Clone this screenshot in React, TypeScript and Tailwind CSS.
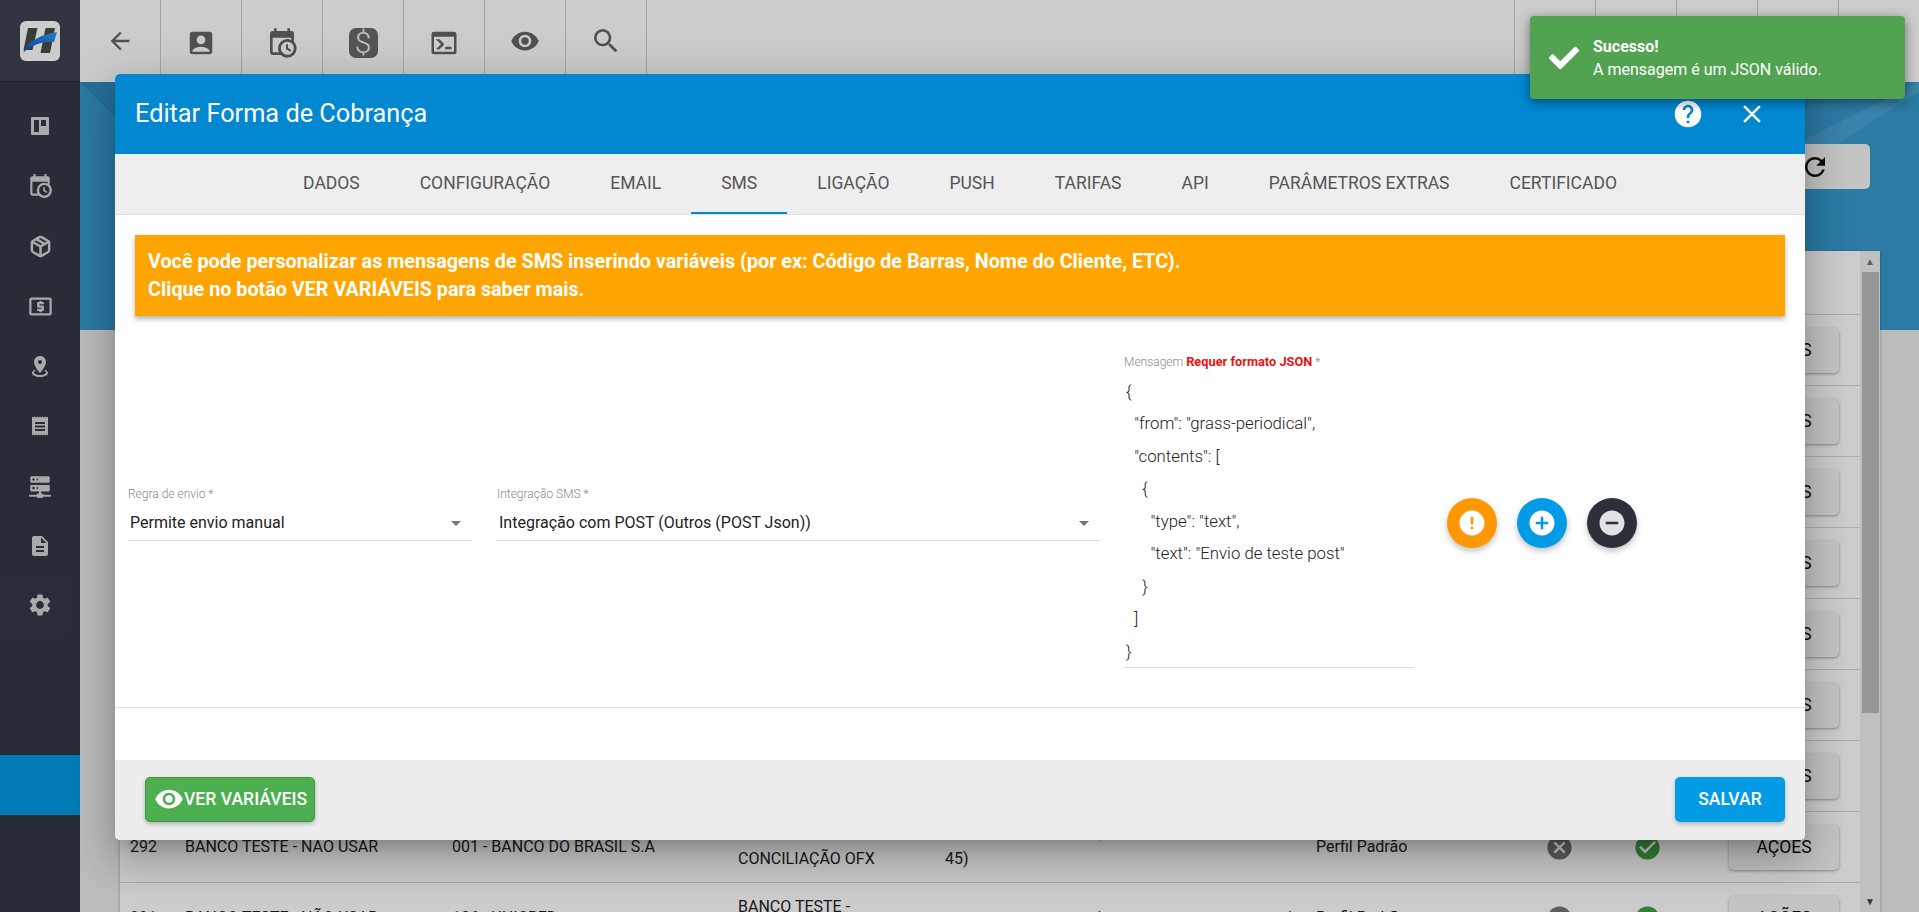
import React from "react";
import {
  MdArrowBack, MdAccountBox, MdVisibility, MdSearch, MdHelp, MdClose, MdError, MdAddCircle,
  MdRemoveCircle, MdArrowDropDown, MdDescription, MdSettings, MdOutlineLocalAtm, MdRefresh, MdCancel, MdCheckCircle,
} from "react-icons/md";
import { FaCheck } from "react-icons/fa";
import { Package } from "lucide-react";

const P = ({ d, size = 24, className = "" }: { d: string; size?: number; className?: string }) => (
  <svg width={size} height={size} viewBox="0 0 24 24" fill="currentColor" className={className}>
    <path d={d} />
  </svg>
);

const calClock = "M15,13H16.5V15.82L18.94,17.23L18.19,18.53L15,16.69V13M19,8H5V19H9.67C9.24,18.09 9,17.07 9,16A7,7 0 0,1 16,9C17.07,9 18.09,9.24 19,9.67V8M5,21C3.89,21 3,20.1 3,19V5C3,3.89 3.89,3 5,3H6V1H8V3H16V1H18V3H19A2,2 0 0,1 21,5V11.1C22.24,12.36 23,14.09 23,16A7,7 0 0,1 16,23C14.09,23 12.36,22.24 11.1,21H5M16,11.15A4.85,4.85 0 0,0 11.15,16C11.15,18.68 13.32,20.85 16,20.85A4.85,4.85 0 0,0 20.85,16C20.85,13.32 18.68,11.15 16,11.15Z";
const marker = "M12,2C15.31,2 18,4.66 18,7.95C18,12.41 12,19 12,19C12,19 6,12.41 6,7.95C6,4.66 8.69,2 12,2M12,6A2,2 0 0,0 10,8A2,2 0 0,0 12,10A2,2 0 0,0 14,8A2,2 0 0,0 12,6M20,19C20,21.21 16.42,23 12,23C7.58,23 4,21.21 4,19C4,17.71 5.22,16.56 7.11,15.83L7.75,16.74C6.67,17.19 6,17.81 6,18.5C6,19.88 8.69,21 12,21C15.31,21 18,19.88 18,18.5C18,17.81 17.33,17.19 16.25,16.74L16.89,15.83C18.78,16.56 20,17.71 20,19Z";
const server = "M13,19H14A1,1 0 0,1 15,20H22V22H15A1,1 0 0,1 14,23H10A1,1 0 0,1 9,22H2V20H9A1,1 0 0,1 10,19H11V17H4A1,1 0 0,1 3,16V12A1,1 0 0,1 4,11H20A1,1 0 0,1 21,12V16A1,1 0 0,1 20,17H13V19M4,3H20A1,1 0 0,1 21,4V8A1,1 0 0,1 20,9H4A1,1 0 0,1 3,8V4A1,1 0 0,1 4,3M9,7H10V5H9V7M9,15H10V13H9V15M5,5V7H7V5H5M5,13V15H7V13H5Z";
const consoleI = "M20,19V7H4V19H20M20,3A2,2 0 0,1 22,5V19A2,2 0 0,1 20,21H4A2,2 0 0,1 2,19V5A2,2 0 0,1 4,3H20M13,17V15H18V17H13M9.58,13L5.57,9H8.4L11.7,12.3C12.09,12.69 12.09,13.33 11.7,13.72L8.42,17H5.59L9.58,13Z";
const board = "M4 3h16a1 1 0 0 1 1 1v16a1 1 0 0 1-1 1H4a1 1 0 0 1-1-1V4a1 1 0 0 1 1-1zm2 3v12h5V6H6zm7 0v6h5V6h-5z";
const receipt = "M4 2.5l1.3 1 1.3-1 1.4 1 1.3-1 1.3 1 1.4-1 1.3 1 1.4-1 1.3 1 1.3-1 1.4 1 1.3-1v19l-1.3-1-1.4 1-1.3-1-1.3 1-1.4-1-1.3 1-1.4-1-1.3 1-1.3-1-1.4 1-1.3-1-1.3 1zM7 8v2h10V8zm0 3.5v2h10v-2zM7 15v2h10v-2z";

const sideIcons = [
  <P d={board} size={24} />,
  <P d={calClock} size={26} />,
  <Package size={23} strokeWidth={2.6} />,
  <MdOutlineLocalAtm size={27} />,
  <P d={marker} size={24} />,
  <P d={receipt} size={24} />,
  <P d={server} size={26} />,
  <MdDescription size={24} />,
  <MdSettings size={26} />,
];

const topIcons = [
  <MdArrowBack size={28} />,
  <MdAccountBox size={30} className="mt-[3px]" />,
  <P d={calClock} size={32} className="mt-[4px]" />,
  <div className="mt-[3px] w-[29px] h-[30px] rounded-[7px] bg-[#6a6a6a] text-[#f2f2f2] flex items-center justify-center text-[30px] leading-none font-light">$</div>,
  <P d={consoleI} size={30} className="mt-[3px]" />,
  <MdVisibility size={30} />,
  <MdSearch size={32} />,
];

const tabs = ["DADOS", "CONFIGURAÇÃO", "EMAIL", "SMS", "LIGAÇÃO", "PUSH", "TARIFAS", "API", "PARÂMETROS EXTRAS", "CERTIFICADO"];

const json = `{
  "from": "grass-periodical",
  "contents": [
    {
      "type": "text",
      "text": "Envio de teste post"
    }
  ]
}`;

const rowCols = "grid grid-cols-[55px_267px_286px_207px_371px_184px_118px_58px_1fr] items-center pl-[10px] h-[71px] border-t border-[#d8d8d8] shrink-0";

const Row = ({ id, bank, acc, emp }: { id: string; bank: string; acc: React.ReactNode; emp: React.ReactNode }) => (
  <div className={rowCols}>
    <div>{id}</div>
    <div>BANCO TESTE - NÃO USAR</div>
    <div>{bank}</div>
    <div className="leading-[23px]">{acc}</div>
    <div className="leading-[23px]">{emp}</div>
    <div>Perfil Padrão</div>
    <div className="flex justify-center"><MdCancel size={29} className="text-[#757575]" /></div>
    <div className="flex justify-center"><MdCheckCircle size={29} className="text-[#43a047]" /></div>
    <div className="pl-[53px]">
      <div className="w-[110px] h-[45px] rounded-[5px] bg-[#f5f5f5] shadow-[0_1px_3px_rgba(0,0,0,0.35)] flex items-center justify-center text-[#111] text-[17.5px]">AÇÕES</div>
    </div>
  </div>
);

const Field = ({ label, value, w }: { label: string; value: string; w: string }) => (
  <div className={`${w} shrink-0 mt-[148px]`}>
    <div className="text-[12px] leading-[14px] text-[#8a8a8a] font-light">{label}</div>
    <div className="flex items-center justify-between h-[36px] mt-[4px] border-b border-[#dcdcdc] pl-[2px] pr-[4px] text-[16px] text-[#222]">
      <span>{value}</span>
      <MdArrowDropDown size={24} className="text-[#757575]" />
    </div>
  </div>
);

const Circle = ({ bg, children }: { bg: string; children: React.ReactNode }) => (
  <div className={`${bg} w-[50px] h-[50px] rounded-full flex items-center justify-center shadow-[0_3px_6px_rgba(0,0,0,0.25)]`}>{children}</div>
);

export default function App() {
  return (
    <div className="relative w-[1919px] h-[912px] overflow-hidden flex bg-[#ebebeb] text-[16px]" style={{ fontFamily: "Roboto, sans-serif" }}>
      <aside className="w-20 shrink-0 flex flex-col bg-[#313745] text-[#d4d4d4]">
        <div className="h-[82px] shrink-0 bg-[#3c414f] border-b border-[#262a34] flex items-center justify-center">
          <div className="w-10 h-10 rounded-[6px] bg-[#ffffff] flex items-center justify-center">
            <svg width="40" height="40" viewBox="0 0 40 40">
              <defs>
                <linearGradient id="sw" x1="0" y1="1" x2="1" y2="0">
                  <stop offset="0" stopColor="#0a55c0" />
                  <stop offset="1" stopColor="#2f9df5" />
                </linearGradient>
              </defs>
              <path d="M8 7h9.5L12.5 29H3.5z" fill="#4a4a4a" />
              <path d="M25.5 7H35l-5 25h-9.5z" fill="#4a4a4a" />
              <path d="M3 32C8 20 20 14 37 11l-3 10C22 20 12 24 3 32z" fill="url(#sw)" />
            </svg>
          </div>
        </div>
        <div className="h-[493px] shrink-0 pt-[14px] flex flex-col">
          {sideIcons.slice(0, 8).map((ic, i) => (
            <div key={i} className="h-[60px] shrink-0 flex items-center justify-center">{ic}</div>
          ))}
        </div>
        <div className="h-[60px] shrink-0 flex items-center justify-center bg-[#343948]">{sideIcons[8]}</div>
        <div className="h-[120px] shrink-0" />
        <div className="h-[60px] shrink-0 bg-[#039be5]" />
        <div className="flex-1" />
      </aside>

      <main className="flex-1 min-w-0 flex flex-col">
        <div className="h-[82px] shrink-0 bg-white flex text-[#666]">
          {topIcons.map((ic, i) => (
            <div key={i} className="w-[81px] border-r border-[#cfcfcf] flex items-center justify-center">{ic}</div>
          ))}
          <div className="flex-1" />
          {[0, 1, 2, 3, 4].map((i) => (
            <div key={i} className="w-[81px] border-l border-[#cfcfcf]" />
          ))}
        </div>
        <div className="relative h-[248px] shrink-0 bg-[#369ace] flex justify-end items-start pt-[62px] pr-[49px] overflow-hidden">
          <svg className="absolute inset-0" width="1839" height="248" viewBox="0 0 1839 248">
            <polygon points="0,0 60,0 60,60" fill="#2f8dbf" />
            <polygon points="1839,0 1839,10 1745,70 1700,70" fill="#5aaddb" opacity="0.5" />
          </svg>
          <div className="relative w-[110px] h-[45px] rounded-[5px] bg-[#f5f5f5] flex items-center justify-center text-[#111]">
            <MdRefresh size={30} />
          </div>
        </div>
        <div className="relative -mt-[79px] ml-10 mr-[39px] h-[800px] shrink-0 bg-white flex text-[#222] shadow-[0_1px_3px_rgba(0,0,0,0.3)]">
          <div className="flex-1 min-w-0 flex flex-col">
            <div className="h-[63px] shrink-0" />
            {Array.from({ length: 7 }).map((_, i) => (
              <Row key={i} id={String(299 - i)} bank="001 - BANCO DO BRASIL S.A" acc="" emp="" />
            ))}
            <Row
              id="292"
              bank="001 - BANCO DO BRASIL S.A"
              acc={<div className="leading-[27px] -mt-[5px]">BANCO TESTE -<br />CONCILIAÇÃO OFX</div>}
              emp={<div className="leading-[27px] -mt-[5px]">EMPRESA DE TESTE (CNPJ 45.243.814/0001-<br />45)</div>}
            />
            <Row id="291" bank="136 - UNICRED" acc={<>BANCO TESTE -<br />CONCILIAÇÃO OFX</>} emp={<>EMPRESA DE TESTE (CNPJ 45.243.814/0001-05)</>} />
          </div>
          <div className="w-5 shrink-0 bg-[#f1f1f1] h-[661px] flex flex-col items-center">
            <div className="h-[21px] flex items-center text-[#777] text-[10px] leading-none">▲</div>
            <div className="w-[17px] h-[441px] bg-[#bdbdbd]" />
            <div className="flex-1" />
            <div className="h-[21px] flex items-center text-[#444] text-[10px] leading-none">▼</div>
          </div>
        </div>
      </main>

      <div className="absolute inset-0 bg-black/20" />

      <section className="absolute left-[115px] top-[74px] w-[1690px] h-[766px] bg-white rounded-[5px] overflow-hidden flex flex-col shadow-[0_11px_15px_-7px_rgba(0,0,0,0.2),0_24px_38px_3px_rgba(0,0,0,0.14),0_9px_46px_8px_rgba(0,0,0,0.12)]">
        <header className="h-20 shrink-0 bg-[#0288d1] text-white flex items-center pl-5 pr-[38px]">
          <h2 className="text-[25.3px] font-normal flex-1">Editar Forma de Cobrança</h2>
          <MdHelp size={32} className="mr-[33px]" />
          <MdClose size={30} />
        </header>
        <nav className="h-[61px] shrink-0 bg-[#eeeeee] border-b border-[#e0e0e0] flex justify-center">
          {tabs.map((t) => (
            <div key={t} className={`px-[30px] pt-[1px] flex items-center text-[17.5px] text-[#555] border-b-2 ${t === "SMS" ? "border-[#0288d1]" : "border-transparent"}`}>{t}</div>
          ))}
        </nav>
        <div className="mx-5 mt-[20px] h-[81px] shrink-0 bg-[#ffa502] shadow-[0_3px_5px_rgba(0,0,0,0.3)] px-[13px] flex flex-col justify-center text-white font-bold text-[19.75px] leading-[28px]">
          <div>Você pode personalizar as mensagens de SMS inserindo variáveis (por ex: Código de Barras, Nome do Cliente, ETC).</div>
          <div>Clique no botão VER VARIÁVEIS para saber mais.</div>
        </div>
        <div className="h-[369px] mt-[23px] shrink-0 border-b border-[#e0e0e0] flex items-start pl-[13px]">
          <Field label="Regra de envio *" value="Permite envio manual" w="w-[344px]" />
          <div className="w-[25px] shrink-0" />
          <Field label="Integração SMS *" value="Integração com POST (Outros (POST Json))" w="w-[603px]" />
          <div className="w-[24px] shrink-0" />
          <div className="w-[290px] shrink-0 mt-[16px]">
            <div className="text-[12px] leading-[14px] text-[#8a8a8a] font-light">
              Mensagem <span className="text-[#ee1111] font-bold text-[12.8px]">Requer formato JSON</span> *
            </div>
            <div className="mt-[6px] border-b border-[#dcdcdc] whitespace-pre text-[16.8px] leading-[32.45px] text-[#222] font-light pl-[2px]">{json}</div>
          </div>
          <div className="flex gap-[20px] ml-[33px] mt-[159px]">
            <Circle bg="bg-[#ff9800]"><MdError size={30} className="text-white" /></Circle>
            <Circle bg="bg-[#039be5]"><MdAddCircle size={30} className="text-white" /></Circle>
            <Circle bg="bg-[#2b2f3a]"><MdRemoveCircle size={30} className="text-[#dfe1e5]" /></Circle>
          </div>
        </div>
        <div className="flex-1" />
        <footer className="h-20 shrink-0 bg-[#ededed] flex items-center justify-between pl-[30px] pr-5">
          <button className="w-[170px] h-[45px] -mt-[2px] rounded-[5px] bg-[#4caf50] border border-[#3a9a3f] shadow-[0_2px_4px_rgba(0,0,0,0.25)] text-white font-medium text-[17.6px] flex items-center pl-[8px]">
            <MdVisibility size={30} />
            <span>VER VARIÁVEIS</span>
          </button>
          <button className="w-[110px] h-[45px] -mt-[2px] rounded-[5px] bg-[#039be5] shadow-[0_2px_4px_rgba(0,0,0,0.25)] text-white font-medium text-[17.6px]">SALVAR</button>
        </footer>
      </section>

      <div className="absolute left-[1530px] top-4 w-[375px] h-[83px] rounded-[4px] bg-[#51a351] text-white flex items-center pl-[19px] shadow-[0_3px_12px_rgba(0,0,0,0.45)]">
        <FaCheck size={30} />
        <div className="ml-[14px] text-[16px] leading-[23px]">
          <div className="font-bold">Sucesso!</div>
          <div>A mensagem é um JSON válido.</div>
        </div>
      </div>
    </div>
  );
}
